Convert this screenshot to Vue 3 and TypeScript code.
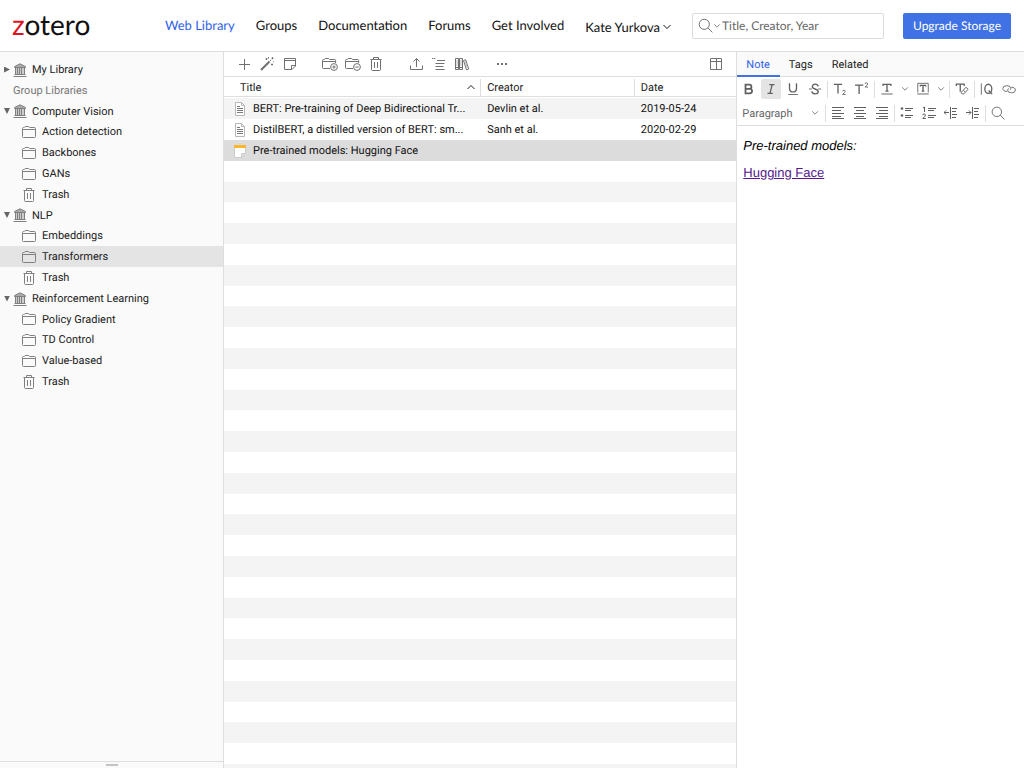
<script setup lang="ts">
import { ref } from 'vue'

interface TreeRow {
  label: string
  kind: 'library' | 'folder' | 'trash' | 'heading'
  open?: boolean
}

interface Item {
  title: string
  creator: string
  date: string
  icon: 'document' | 'note'
}

const navLinks = ['Web Library', 'Groups', 'Documentation', 'Forums', 'Get Involved']

const tree: TreeRow[] = [
  { label: 'My Library', kind: 'library', open: false },
  { label: 'Group Libraries', kind: 'heading' },
  { label: 'Computer Vision', kind: 'library', open: true },
  { label: 'Action detection', kind: 'folder' },
  { label: 'Backbones', kind: 'folder' },
  { label: 'GANs', kind: 'folder' },
  { label: 'Trash', kind: 'trash' },
  { label: 'NLP', kind: 'library', open: true },
  { label: 'Embeddings', kind: 'folder' },
  { label: 'Transformers', kind: 'folder' },
  { label: 'Trash', kind: 'trash' },
  { label: 'Reinforcement Learning', kind: 'library', open: true },
  { label: 'Policy Gradient', kind: 'folder' },
  { label: 'TD Control', kind: 'folder' },
  { label: 'Value-based', kind: 'folder' },
  { label: 'Trash', kind: 'trash' },
]
const selectedRow = ref(9)

const toolGroups = [
  [
    { icon: 'plus', label: 'New item' },
    { icon: 'wand', label: 'Add by identifier' },
    { icon: 'sticky', label: 'Add note' },
  ],
  [
    { icon: 'folder-add', label: 'Add to collection' },
    { icon: 'folder-remove', label: 'Remove from collection' },
    { icon: 'trash', label: 'Move to trash' },
  ],
  [
    { icon: 'export', label: 'Export' },
    { icon: 'citation', label: 'Create citation' },
    { icon: 'books', label: 'Create bibliography' },
  ],
  [{ icon: 'dots', label: 'More' }],
]

const items: Item[] = [
  {
    title: 'BERT: Pre-training of Deep Bidirectional Tr...',
    creator: 'Devlin et al.',
    date: '2019-05-24',
    icon: 'document',
  },
  {
    title: 'DistilBERT, a distilled version of BERT: sm...',
    creator: 'Sanh et al.',
    date: '2020-02-29',
    icon: 'document',
  },
  { title: 'Pre-trained models: Hugging Face', creator: '', date: '', icon: 'note' },
]
const selectedItem = ref(2)
const blankRows = 60

const tabs = ['Note', 'Tags', 'Related']
const activeTab = ref('Note')

const formatTools = [
  'bold', 'italic', 'underline', 'strike', '|', 'sub', 'sup', '|',
  'color', 'chevron', 'highlight', 'chevron', '|', 'clear', '|', 'quote', 'link',
]
const blockTools = [
  'left', 'center', 'right', '|', 'ul', 'ol', 'outdent', 'indent', '|', 'search',
]
</script>

<template>
  <div class="app">
    <svg class="sprite" aria-hidden="true">
      <symbol id="chevron" viewBox="0 0 10 10"><path d="M1.500 3l3.500 3.500L8.500 3" /></symbol>
      <symbol id="search" viewBox="0 0 16 16"><circle cx="6.700" cy="6.700" r="5.400" /><path d="M10.600 10.600l4.700 4.700" /></symbol>
      <symbol id="library" viewBox="0 0 14 14">
        <path class="roof" d="M7 .8L12.500 3.600V4.500h-11V3.600z" />
        <path class="wall" d="M3 5h8v6H3z" />
        <path d="M2.500 5v6.500M4.500 5v6.500M6.500 5v6.500M8.500 5v6.500M11.500 5v6.500M1.500 11.500h11M.5 13.500h13" />
      </symbol>
      <symbol id="folder" viewBox="0 0 14 14">
        <path d="M.5 11.500V3.500q0-1 1-1h.8l.8-1h3.500l.9 1h5q1 0 1 1v8q0 1-1 1h-11q-1 0-1-1zM.5 4.500h13" />
      </symbol>
      <symbol id="trash" viewBox="0 0 14 14">
        <path d="M1.500 2.500h11M4.500 2.500v-2h5v2M2.500 2.500v10q0 1 1 1h7q1 0 1-1v-10M5.500 5v6M8.500 5v6" />
      </symbol>
      <symbol id="plus" viewBox="0 0 16 16"><path d="M8.500 3v11M3 8.500h11" /></symbol>
      <symbol id="wand" viewBox="0 0 16 16">
        <path class="thick" d="M2 14l8.500-8.500" /><path d="M11 5l1.200-1.200M6.500 3h2M7.500 2v2M12 8.500h2M13 7.500v2M9.500 1v1.500M13.500 1.200v2M12.500 2.200h2M14.500 5.500v.8" />
      </symbol>
      <symbol id="sticky" viewBox="0 0 16 16">
        <path d="M2.500 2.500h11v7.500l-3.500 3.500H2.500zM2.500 4.500h11M13.500 9.500h-4v4" />
      </symbol>
      <symbol id="folder-add" viewBox="0 0 16 16">
        <path d="M8 12.500H1.500q-1 0-1-1V4.500q0-1 1-1h.9L3.200 2.500h3.500l.9 1h5q1 0 1 1v2.500M.5 5.500h13" />
        <circle cx="12" cy="11" r="3.400" /><path d="M12 9.300v3.400M10.300 11h3.400" />
      </symbol>
      <symbol id="folder-remove" viewBox="0 0 16 16">
        <path d="M8 12.500H1.500q-1 0-1-1V4.500q0-1 1-1h.9L3.200 2.500h3.500l.9 1h5q1 0 1 1v2.500M.5 5.500h13" />
        <circle cx="12" cy="11" r="3.400" /><path d="M10.300 11h3.400" />
      </symbol>
      <symbol id="export" viewBox="0 0 16 16"><path d="M2.500 9.500v4h12v-4M8.500 11V2.500M5.500 5.500l3-3 3 3" /></symbol>
      <symbol id="citation" viewBox="0 0 16 16">
        <path d="M6 4.500h8M4.500 7.500h9M4.500 10.500h8M4.500 13.500h9M1 2.500h1.400M3 2.500h1.400" />
      </symbol>
      <symbol id="books" viewBox="0 0 16 16">
        <path d="M1.500 2.500h3v11h-3zM5.500 2.500h3v11h-3zM9.500 4.500l2.200-.7 3 9.200-2.200.8zM1.500 11.500h3M5.500 11.500h3" /><path class="faint" d="M3 4v6M7 4v6M11.300 5.500l2 6" />
      </symbol>
      <symbol id="dots" viewBox="0 0 16 16">
        <rect class="solid" x="3" y="7" width="2" height="2" /><rect class="solid" x="7" y="7" width="2" height="2" /><rect class="solid" x="11" y="7" width="2" height="2" />
      </symbol>
      <symbol id="columns" viewBox="0 0 14 14"><path d="M1.500 1.500h11v11h-11zM1.500 4.500h11M7.500 1.500v11" /></symbol>
      <symbol id="document" viewBox="0 0 12 14">
        <path class="sheet" d="M1.500 .5h6l3 3v10h-9zM7.500 .5v3h3" />
        <path d="M3 4.500h3M3 6.500h6M3 8.500h6M3 10.500h6" />
      </symbol>
      <symbol id="note" viewBox="0 0 12 14">
        <path class="paper" d="M.5 2h11v7.500l-4 4H.5z" /><path class="fold" d="M7.500 13.500v-4h4z" />
        <path class="band" d="M0 1h12v3H0z" />
      </symbol>
      <symbol id="bold" viewBox="0 0 16 16"><path class="heavy" d="M4 3h4.300q2.500 0 2.500 2.400T8.300 7.800H4zM4 7.800h4.800q2.700 0 2.700 2.600T8.800 13H4z" /></symbol>
      <symbol id="italic" viewBox="0 0 16 16"><path class="medium" d="M6 3h6M4 13h6M9.300 3l-2.500 10" /></symbol>
      <symbol id="underline" viewBox="0 0 16 16"><path class="medium" d="M4 1.500v5.500q0 4.300 4 4.300t4-4.300V1.500" /><path d="M2.500 14.300h11" /></symbol>
      <symbol id="strike" viewBox="0 0 16 16"><path class="medium" d="M11.700 5Q11 2.500 8.200 2.500T4.900 5.200Q4.900 7.200 8 8t3.700 2.800q0 2.700-3.500 2.700T4.300 10.800" /><path d="M1 8h3.500M11.500 8H15" /></symbol>
      <symbol id="sub" viewBox="0 0 16 16"><path class="medium" d="M1 2.700h9.500M5.700 2.700V13" /><path d="M11 10.700q0-1.300 1.500-1.300T14 10.700q0 .9-3 3.600h3.400" /></symbol>
      <symbol id="sup" viewBox="0 0 16 16"><path class="medium" d="M0 3.500h9.500M4.700 3.500v10.300" /><path d="M11.500 2.200q0-1.300 1.500-1.300T14.500 2.200q0 .9-3 3.600h3.400" /></symbol>
      <symbol id="color" viewBox="0 0 16 16"><path class="medium" d="M3.500 4.500V2.700h9v1.800M8 2.700v8M6.200 10.500h3.600" /><path class="pale" d="M1.500 13.700h13" /></symbol>
      <symbol id="highlight" viewBox="0 0 16 16"><path d="M2 12V1.500h12V12" /><path class="medium" d="M5 5V3.800h6V5M8 3.800v6.700M6.500 10.500h3" /><path class="pale" d="M1.500 13.700h13" /></symbol>
      <symbol id="clear" viewBox="0 0 16 16"><path class="medium" d="M1.500 4.500V2.500h9v2M6 2.500v8.500" /><path d="M7.500 11.500l5-5.500 2.500 2.200-4.700 5.300H8.300L6.800 12.500zM9.500 9.300l2.300 2.300" /></symbol>
      <symbol id="quote" viewBox="0 0 16 16"><path d="M1.500 1.500v13" /><ellipse class="medium" cx="9.500" cy="7.800" rx="4" ry="5.200" /><path class="medium" d="M9.800 9.800l4 4" /></symbol>
      <symbol id="link" viewBox="0 0 16 16"><path d="M6 10.800Q1 10.800 1 7.500T5.500 4.200Q10 4.300 10 7.200 10 8.500 9 9.300M10.500 6Q15.300 6.200 15.300 9.200T11 12.500Q6.500 12.300 6.500 9.500 6.500 8.200 7.500 7.300" /></symbol>
      <symbol id="left" viewBox="0 0 14 14"><path d="M1 1.500h12M1 4.500h9M1 7.500h12M1 10.500h9M1 12.500h12" /></symbol>
      <symbol id="center" viewBox="0 0 14 14"><path d="M1 1.500h12M3 4.500h8M1 7.500h12M3 10.500h8M1 12.500h12" /></symbol>
      <symbol id="right" viewBox="0 0 14 14"><path d="M1 1.500h12M4 4.500h9M1 7.500h12M4 10.500h9M1 12.500h12" /></symbol>
      <symbol id="ul" viewBox="0 0 14 14"><path d="M5 2.500h8M5 4.500h6M5 9.500h8M5 11.500h6" /><circle class="solid" cx="2" cy="2.500" r="1.300" /><circle class="solid" cx="2" cy="9.500" r="1.300" /></symbol>
      <symbol id="ol" viewBox="0 0 14 14"><path d="M6 2.500h8M6 4.500h6M6 9.500h8M6 11.500h6M1 2l1.500-1v5M.8 9.300q0-1.300 1.300-1.300t1.300 1.200q0 .8-2.500 3.300h2.900" /></symbol>
      <symbol id="outdent" viewBox="0 0 14 14"><path d="M6.500 1v12M8 2.500h5M8 5.500h4M8 8.500h5M8 11.500h4M5 6.500H0M2 4.500l-2 2 2 2" /></symbol>
      <symbol id="indent" viewBox="0 0 14 14"><path d="M6.500 1v12M8 2.500h5M8 5.500h4M8 8.500h5M8 11.500h4M0 6.500h5M3 4.500l2 2-2 2" /></symbol>
    </svg>

    <header class="topbar">
      <a class="logo" href="#"><span class="logo-z">z</span>otero</a>
      <nav class="nav">
        <a v-for="(link, i) in navLinks" :key="link" href="#" :class="{ active: i === 0 }">{{ link }}</a>
        <button class="user" type="button">Kate Yurkova<svg class="chev"><use href="#chevron" /></svg></button>
      </nav>
      <div class="search">
        <button type="button" aria-label="Search mode">
          <svg class="lens"><use href="#search" /></svg><svg class="chev small"><use href="#chevron" /></svg>
        </button>
        <input type="search" aria-label="Search" placeholder="Title, Creator, Year" />
      </div>
      <a class="upgrade" href="#">Upgrade Storage</a>
    </header>

    <main class="panes">
      <aside class="sidebar">
        <ul class="tree">
          <li v-for="(row, i) in tree" :key="i" :class="[row.kind, { selected: i === selectedRow }]">
            <template v-if="row.kind === 'heading'">{{ row.label }}</template>
            <button v-else type="button" @click="selectedRow = i">
              <span v-if="row.kind === 'library'" class="twisty" :class="{ open: row.open }"></span>
              <svg class="tree-icon"><use :href="'#' + row.kind" /></svg>
              <span>{{ row.label }}</span>
            </button>
          </li>
        </ul>
        <div class="tag-handle"><span></span></div>
      </aside>

      <section class="items">
        <div class="toolbar">
          <div v-for="(group, g) in toolGroups" :key="g" class="tool-group">
            <button v-for="tool in group" :key="tool.icon" type="button" :aria-label="tool.label">
              <svg :class="tool.icon"><use :href="'#' + tool.icon" /></svg>
            </button>
          </div>
          <button class="column-picker" type="button" aria-label="Columns"><svg><use href="#columns" /></svg></button>
        </div>
        <div class="table-wrap">
          <table>
            <thead>
              <tr>
                <th class="col-title"><div>Title<svg class="chev up"><use href="#chevron" /></svg></div></th>
                <th class="col-creator"><div>Creator</div></th>
                <th class="col-date"><div>Date</div></th>
              </tr>
            </thead>
            <tbody>
              <tr v-for="(item, i) in items" :key="item.title" :class="{ selected: i === selectedItem }" @click="selectedItem = i">
                <td><div class="title-cell"><svg><use :href="'#' + item.icon" /></svg><span>{{ item.title }}</span></div></td>
                <td>{{ item.creator }}</td>
                <td>{{ item.date }}</td>
              </tr>
              <tr v-for="n in blankRows" :key="n" aria-hidden="true"><td colspan="3"></td></tr>
            </tbody>
          </table>
        </div>
      </section>

      <section class="details">
        <div class="tabs" role="tablist">
          <button v-for="tab in tabs" :key="tab" type="button" role="tab" :aria-selected="tab === activeTab" @click="activeTab = tab">{{ tab }}</button>
        </div>
        <div class="editor-tools">
          <div class="tool-row">
            <template v-for="(tool, i) in formatTools" :key="i">
              <span v-if="tool === '|'" class="divider"></span>
              <button v-else type="button" :aria-label="tool" :class="{ narrow: tool === 'chevron', pressed: tool === 'italic' }">
                <svg><use :href="'#' + tool" /></svg>
              </button>
            </template>
          </div>
          <div class="tool-row">
            <div class="format">
              <select aria-label="Block format"><option>Paragraph</option></select>
              <svg class="chev small"><use href="#chevron" /></svg>
            </div>
            <span class="divider"></span>
            <template v-for="(tool, i) in blockTools" :key="i">
              <span v-if="tool === '|'" class="divider"></span>
              <button v-else type="button" :aria-label="tool"><svg><use :href="'#' + tool" /></svg></button>
            </template>
          </div>
        </div>
        <article class="note-body">
          <p><em>Pre-trained models:</em></p>
          <p><a href="#">Hugging Face</a></p>
        </article>
      </section>
    </main>
  </div>
</template>

<style>
body {
  background: #fff;
}
</style>

<style scoped>
.app {
  display: flex;
  flex-direction: column;
  height: 100vh;
  overflow: hidden;
  font-family: Roboto, Inter, sans-serif;
  font-size: 11px;
  text-rendering: geometricPrecision;
  color: #222;
}
.sprite {
  display: none;
}
svg {
  flex: none;
  fill: none;
  stroke: currentColor;
  stroke-width: 1;
}
.solid {
  fill: currentColor;
  stroke: none;
}
.roof {
  fill: #aaa;
}
.wall {
  fill: #ccc;
  stroke: none;
}
.thick,
.heavy {
  stroke-width: 2;
}
.medium {
  stroke-width: 1.5;
}
.faint {
  stroke: #bbb;
}
.pale {
  stroke: #aaa;
  stroke-width: 2;
}
.sheet {
  fill: #fff;
  stroke: #b8b8b8;
}
.paper {
  fill: #fff;
  stroke: #ccc;
}
.fold {
  fill: #e0e0e0;
  stroke: #ccc;
}
.band {
  fill: #fdb82a;
  stroke: none;
}
button {
  margin: 0;
  padding: 0;
  border: 0;
  background: none;
  font: inherit;
  text-rendering: inherit;
  color: inherit;
  cursor: pointer;
}
.chev {
  width: 10px;
  height: 10px;
}
.small {
  width: 8px;
  height: 8px;
}

.topbar {
  flex: none;
  display: flex;
  align-items: center;
  height: 51px;
  padding: 0 13px 0 12px;
  border-bottom: 1px solid #dedede;
  font-family: Lato, "Open Sans", sans-serif;
  font-size: 13px;
}
.topbar a {
  color: #111;
  text-decoration: none;
}
.topbar .logo {
  flex: none;
  width: 153px;
  font-size: 28px;
  line-height: 44px;
  padding-bottom: 4px;
}
.topbar .logo-z {
  color: #e1121e;
}
.nav {
  display: flex;
  gap: 21px;
  white-space: nowrap;
}
.topbar .nav .active {
  color: #2e62e8;
}
.user {
  display: flex;
  align-items: center;
  gap: 2px;
  padding-top: 2px;
  color: #111;
}
.search {
  flex: none;
  display: flex;
  align-items: center;
  box-sizing: border-box;
  width: 192px;
  height: 26px;
  margin-left: auto;
  padding-left: 5px;
  border: 1px solid #dcdcdc;
  border-radius: 2px;
  color: #666;
}
.search button {
  display: flex;
  align-items: center;
}
.lens {
  width: 15px;
  height: 15px;
}
.search input {
  flex: 1;
  min-width: 0;
  padding: 0 0 0 1px;
  border: 0;
  outline: 0;
  background: none;
  font: inherit;
  font-size: 12px;
  text-rendering: inherit;
}
.search input::placeholder {
  color: #666;
}
.topbar .upgrade {
  flex: none;
  margin-left: 19px;
  padding: 0 10px;
  border-radius: 2px;
  background: #4072e5;
  color: #fff;
  font-size: 12px;
  line-height: 26px;
  white-space: nowrap;
}

.panes {
  flex: 1;
  min-height: 0;
  display: flex;
}
.sidebar {
  flex: none;
  box-sizing: border-box;
  width: 224px;
  display: flex;
  flex-direction: column;
  border-right: 1px solid #dedede;
  background: #fafafa;
}
.tree {
  flex: 1;
  margin: 0;
  padding: 7px 0 0;
  list-style: none;
}
.tree li {
  height: 21px;
  line-height: 21px;
}
.tree li:nth-child(5n + 3) {
  height: 20px;
}
.tree .heading {
  padding-left: 13px;
  color: #777;
}
.tree .selected {
  background: #e4e4e4;
}
.tree button {
  display: flex;
  align-items: center;
  width: 100%;
  height: 100%;
  padding-left: 22px;
}
.tree .library button {
  padding-left: 4px;
}
.tree-icon {
  width: 14px;
  height: 14px;
  margin-right: 6px;
  color: #808080;
}
.library .tree-icon {
  margin-right: 5px;
}
.twisty {
  width: 9px;
  height: 6px;
  background: linear-gradient(#666, #666) left / 6px 6px no-repeat;
  clip-path: polygon(0 0, 6px 3px, 0 6px);
}
.twisty.open {
  clip-path: polygon(0 0, 6px 0, 3px 6px);
}
.tag-handle {
  flex: none;
  display: flex;
  justify-content: center;
  height: 6px;
  border-top: 1px solid #dedede;
}
.tag-handle span {
  width: 12px;
  height: 2px;
  margin-top: 2px;
  background: #c4c4c4;
}

.items {
  flex: 1;
  min-width: 0;
  display: flex;
  flex-direction: column;
}
.toolbar {
  flex: none;
  display: flex;
  align-items: center;
  gap: 18px;
  height: 24px;
  padding: 0 9px;
  border-bottom: 1px solid #dedede;
  color: #707070;
}
.tool-group {
  display: flex;
  gap: 1px;
}
.toolbar button {
  display: flex;
  align-items: center;
  justify-content: center;
  width: 22px;
  height: 22px;
}
.toolbar svg {
  width: 16px;
  height: 16px;
}
.toolbar svg.trash,
.column-picker svg {
  width: 14px;
  height: 14px;
}
.column-picker {
  margin-left: auto;
}
.table-wrap {
  flex: 1;
  min-height: 0;
  overflow: hidden;
}
table {
  width: 100%;
  table-layout: fixed;
  border-spacing: 0;
}
th {
  height: 20px;
  padding: 0 0 1px;
  background: linear-gradient(#dedede, #dedede) 0 19px / 100% 1px no-repeat;
  font-weight: 400;
  text-align: left;
}
th div {
  display: flex;
  align-items: center;
  justify-content: space-between;
  height: 17px;
  padding: 0 4px 0 6px;
  border-left: 1px solid #dedede;
}
th.col-title div {
  padding-left: 16px;
  border-left: 0;
}
.col-title {
  width: 50%;
}
.col-creator {
  width: 30%;
}
.up {
  transform: rotate(180deg);
}
td {
  height: 21px;
  padding: 0 0 0 7px;
  line-height: 21px;
  white-space: nowrap;
  color: #111;
}
tbody tr:nth-child(5n) td {
  height: 20px;
}
tbody tr:nth-child(odd) {
  background: #f4f4f4;
}
tbody tr.selected {
  background: #dcdcdc;
}
.title-cell {
  display: flex;
  align-items: center;
  gap: 7px;
  padding: 0 4px 0 3px;
}
.title-cell svg {
  width: 12px;
  height: 14px;
  color: #777;
}
.title-cell span {
  overflow: hidden;
  text-overflow: ellipsis;
}

.details {
  flex: none;
  width: 28%;
  display: flex;
  flex-direction: column;
  border-left: 1px solid #dedede;
}
.tabs {
  flex: none;
  display: flex;
  height: 24px;
  border-bottom: 1px solid #dedede;
  background: #fafafa;
}
.tabs button {
  height: 25px;
  padding: 2px 10px 0 9px;
  border-bottom: 2px solid transparent;
  color: #222;
}
.tabs button[aria-selected='true'] {
  border-color: #4072e5;
  color: #2e62e8;
}
.editor-tools {
  flex: none;
  border-bottom: 1px solid #dedede;
}
.tool-row {
  display: flex;
  align-items: center;
  gap: 2px;
  height: 24px;
  padding-left: 2px;
  overflow: hidden;
  color: #606060;
}
.tool-row button {
  flex: none;
  display: flex;
  align-items: center;
  justify-content: center;
  width: 20px;
  height: 20px;
  border-radius: 2px;
}
.tool-row button svg {
  width: 14px;
  height: 14px;
}
.tool-row button.narrow {
  width: 12px;
}
.tool-row button.narrow svg {
  width: 8px;
  height: 8px;
}
.tool-row .pressed {
  background: #e4e4e4;
}
.divider {
  flex: none;
  width: 1px;
  height: 17px;
  background: #dedede;
}
.format {
  flex: none;
  display: flex;
  align-items: center;
  width: 84px;
}
.format select {
  flex: 1;
  min-width: 0;
  padding: 0 0 0 3px;
  border: 0;
  background: none;
  appearance: none;
  font: inherit;
  text-rendering: inherit;
  color: #666;
}
.format .chev {
  margin-right: 4px;
}
.note-body {
  flex: 1;
  padding: 10px 6px;
  font-family: "Liberation Sans", Arial, sans-serif;
  font-size: 13px;
  line-height: 19px;
  color: #000;
}
.note-body p {
  margin: 0 0 8px;
}
.note-body a {
  color: #551a8b;
}
</style>
